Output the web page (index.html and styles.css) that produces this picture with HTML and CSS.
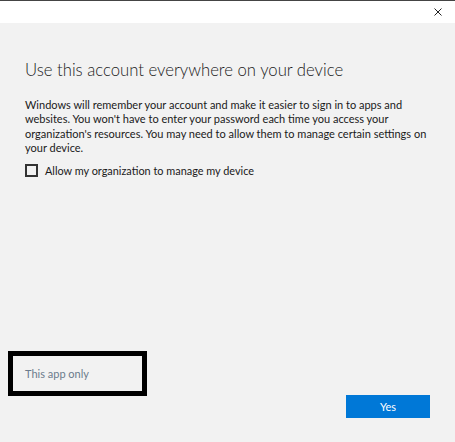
FILE: index.html
```html
<!DOCTYPE html>
<html lang="en">

<head>
    <meta charset="UTF-8" />
    <title>Use this account everywhere</title>
    <link rel="stylesheet" href="styles.css">
</head>

<body>
    <div class="dialog">
        <!-- barra de título -->
        <div class="titlebar">
            <span class="close-btn">
                <svg width="8" height="8" viewBox="0 0 8 8">
                    <path d="M0.5 0.5 L7.5 7.5 M7.5 0.5 L0.5 7.5" stroke="#222" stroke-width="1" fill="none" />
                </svg>
            </span>
        </div>

        <div class="content">
            <h1>Use this account everywhere on your device</h1>
            <p class="desc">Windows will remember your account and make it easier to sign in to apps and websites. You won't have to enter your password each time you access your organization's resources. You may need to allow them to manage certain settings on your device.</p>

            <label class="check-row">
                <span class="check-box"></span>
                Allow my organization to manage my device
            </label>

            <div class="footer">
                <div class="highlight">
                    <a class="app-only" href="#">This app only</a>
                </div>
                <button class="yes-btn">Yes</button>
            </div>
        </div>
    </div>
</body>
</html>
```

FILE: styles.css
```css
/* Estilos da página */
body {
    margin: 0;
    font-family: 'Lato', 'Noto Sans', sans-serif;
    background-color: #f2f2f2;
}

.dialog {
    width: 455px;
    height: 442px;
    display: flex;
    flex-direction: column;
    border-top: 1px solid #444;
    box-sizing: border-box;
}

/* Barra de título */
.titlebar {
    height: 22px;
    background: white;
    display: flex;
    justify-content: flex-end;
    align-items: center;
    padding-right: 13px;
}

.close-btn {
    display: flex;
}

/* Conteúdo */
.content {
    flex: 1;
    display: flex;
    flex-direction: column;
    padding: 0 25px;
}

h1 {
    font-weight: 300;
    font-size: 16.7px;
    color: #1a1a1a;
    margin: 35px 0 0 0;
    line-height: 24px;
}

.desc {
    font-size: 11px;
    line-height: 14.3px;
    color: #1a1a1a;
    margin: 16px 0 0 0;
}

.check-row {
    display: flex;
    align-items: center;
    gap: 7px;
    font-size: 10.9px;
    color: #1a1a1a;
    margin-top: 9px;
}

.check-box {
    width: 9px;
    height: 9px;
    border: 2px solid #333;
    background: #f2f2f2;
}

/* Rodapé */
.footer {
    margin-top: auto;
    display: flex;
    justify-content: space-between;
    align-items: flex-end;
    margin-left: -17px;
    margin-bottom: 24px;
}

.highlight {
    box-sizing: border-box;
    width: 139px;
    height: 45px;
    border: 5px solid black;
    display: flex;
    align-items: center;
    padding-left: 12px;
    margin-bottom: 22px;
}

.app-only {
    font-size: 11px;
    color: #6b7b8c;
    text-decoration: none;
}

.yes-btn {
    width: 84px;
    height: 23px;
    background-color: #0078d7;
    color: white;
    border: none;
    font-family: inherit;
    font-size: 11px;
    padding: 0;
}
```
